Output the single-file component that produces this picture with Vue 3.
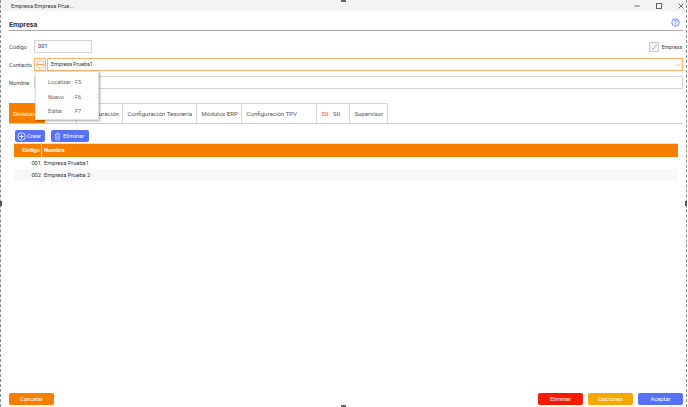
<script setup>
const tabs = [
  { label: 'Divisiones', width: 36, active: true },
  { label: '', width: 32 },
  { label: 'Configuración', width: 46, right: true },
  { label: 'Configuración Tesorería', width: 74 },
  { label: 'Módulos ERP', width: 45 },
  { label: 'Configuración TPV', width: 75 },
  { label: 'SII', width: 33, sii: true },
  { label: 'Supervisor', width: 38 }
]
const rows = [
  { code: '001', name: 'Empresa Prueba1' },
  { code: '002', name: 'Empresa Prueba 2' }
]
const menu = [
  { label: 'Localizar', key: 'F5' },
  { label: 'Nuevo', key: 'F6' },
  { label: 'Editar', key: 'F7' }
]
</script>

<template>
  <div class="window">
    <div class="handle handle-top"></div>
    <div class="handle handle-bottom"></div>
    <div class="handle-side handle-left"></div>
    <div class="handle-side handle-right"></div>

    <div class="titlebar">
      <span class="title-text">Empresa Empresa Prue...</span>
      <div class="win-buttons">
        <svg width="8" height="8" viewBox="0 0 8 8"><path d="M1.5 4h5" stroke="#555" stroke-width="0.9" fill="none"/></svg>
        <svg width="8" height="8" viewBox="0 0 8 8"><rect x="1.5" y="1.5" width="5" height="5" stroke="#555" stroke-width="0.9" fill="none"/></svg>
        <svg width="8" height="8" viewBox="0 0 8 8"><path d="M1.5 1.5l5 5M6.5 1.5l-5 5" stroke="#555" stroke-width="0.8" fill="none"/></svg>
      </div>
    </div>

    <div class="content">
      <div class="section-head">
        <span class="section-title">Empresa</span>
        <svg class="help" width="9" height="9" viewBox="0 0 10 10">
          <circle cx="5" cy="5" r="4.2" stroke="#5b77ee" stroke-width="0.9" fill="#eef1ff"/>
          <path d="M3.7 3.9c0-1.7 2.7-1.7 2.7 0 0 1-1.4 1-1.4 2.1" stroke="#5b77ee" stroke-width="0.9" fill="none"/>
          <circle cx="5" cy="7.5" r="0.55" fill="#5b77ee"/>
        </svg>
      </div>

      <div class="form-row first">
        <label class="lbl">Código</label>
        <div class="input code-input">001</div>
        <div class="check-wrap">
          <span class="check">
            <svg width="8" height="8" viewBox="0 0 8 8"><path d="M1 4.5l2 2 4-5" stroke="#7d9fe0" stroke-width="0.8" fill="none"/></svg>
          </span>
          <span class="check-label">Empresa</span>
        </div>
      </div>

      <div class="form-row">
        <label class="lbl">Contacto</label>
        <div class="icon-box">
          <svg width="9" height="9" viewBox="0 0 10 10">
            <circle cx="5" cy="5" r="4.3" stroke="#f9a24b" stroke-width="0.9" fill="none"/>
            <path d="M1.2 5h7.6" stroke="#f9a24b" stroke-width="1.1" fill="none"/>
          </svg>
        </div>
        <div class="input select-input">
          <span>Empresa Prueba1</span>
          <svg width="5" height="4" viewBox="0 0 5 4"><path d="M0.6 1l1.9 2 1.9-2" stroke="#f9a24b" stroke-width="0.8" fill="none"/></svg>
        </div>

        <div class="menu">
          <div v-for="item in menu" :key="item.key" class="menu-item">
            <span class="menu-label">{{ item.label }}</span>
            <span>{{ item.key }}</span>
          </div>
        </div>
      </div>

      <div class="form-row">
        <label class="lbl">Nombre</label>
        <div class="input name-input"></div>
      </div>

      <div class="tabs">
        <div
          v-for="tab in tabs"
          :key="tab.width"
          class="tab"
          :class="{ active: tab.active, right: tab.right }"
          :style="{ width: tab.width + 'px' }"
        >
          <span v-if="tab.sii" class="sii-logo">SII</span>
          {{ tab.label }}
        </div>
      </div>

      <div class="toolbar">
        <button class="btn-blue crear">
          <svg width="9" height="9" viewBox="0 0 10 10">
            <circle cx="5" cy="5" r="4.2" stroke="#fff" stroke-width="0.9" fill="none"/>
            <path d="M5 2.6v4.8M2.6 5h4.8" stroke="#fff" stroke-width="0.9"/>
          </svg>
          Crear
        </button>
        <button class="btn-blue eliminar">
          <svg width="7" height="9" viewBox="0 0 8 10">
            <path d="M1 2.5h6M3 2.5V1h2v1.5M1.6 2.5l.4 6.8h4l.4-6.8M3.2 4v4M4.8 4v4" stroke="#dfe5ff" stroke-width="0.7" fill="none"/>
          </svg>
          Eliminar
        </button>
      </div>

      <div class="grid">
        <div class="grid-head">
          <div class="col-code">Código</div>
          <div class="col-name">Nombre</div>
        </div>
        <div v-for="row in rows" :key="row.code" class="grid-row">
          <div class="col-code">{{ row.code }}</div>
          <div class="col-name">{{ row.name }}</div>
        </div>
      </div>
    </div>

    <div class="footer">
      <button class="foot-btn cancel">Cancelar</button>
      <div class="foot-right">
        <button class="foot-btn del">Eliminar</button>
        <button class="foot-btn opt">Opciones</button>
        <button class="foot-btn ok">Aceptar</button>
      </div>
    </div>
  </div>
</template>

<style scoped>
.window {
  position: relative;
  width: 688px;
  height: 407px;
  display: flex;
  flex-direction: column;
  background: #fff;
  font-family: Roboto, "Liberation Sans", sans-serif;
  font-size: 5.7px;
  color: #444;
  overflow: hidden;
}
.window::before,
.window::after {
  content: "";
  position: absolute;
  top: 0;
  bottom: 0;
  width: 0;
  border-left: 1px dashed #8a8a8a;
  z-index: 3;
}
.window::before { left: 0; }
.window::after { left: 686px; }
.handle {
  position: absolute;
  left: 341px;
  width: 5px;
  height: 2px;
  background: #666;
  z-index: 4;
}
.handle-top { top: 0; }
.handle-bottom { bottom: 0; }
.handle-side {
  position: absolute;
  top: 201px;
  width: 2px;
  height: 5px;
  background: #555;
  z-index: 4;
}
.handle-left { left: 0; }
.handle-right { left: 685px; }

.titlebar {
  height: 11px;
  flex: none;
  background: #f3f3f4;
  display: flex;
  align-items: center;
  justify-content: space-between;
  padding: 0 3px 0 11px;
  color: #333;
}
.title-text {
  font-size: 5.6px;
}
.win-buttons {
  display: flex;
  gap: 14px;
}
.content {
  flex: 1;
  display: flex;
  flex-direction: column;
  padding: 0 5px 0 9px;
}
.section-head {
  height: 20px;
  flex: none;
  border-bottom: 1px solid #aaa;
  display: flex;
  align-items: center;
  justify-content: space-between;
  padding-top: 8px;
  box-sizing: border-box;
}
.section-title {
  font-size: 7.2px;
  font-weight: 700;
  color: #333;
}
.help {
  margin-top: -5px;
  margin-right: 3px;
}
.form-row {
  position: relative;
  height: 13px;
  margin-top: 5px;
  display: flex;
  align-items: center;
}
.form-row.first {
  margin-top: 9px;
}
.lbl {
  width: 25px;
  flex: none;
  padding-top: 1px;
}
.input {
  height: 13px;
  box-sizing: border-box;
  border: 1px solid #d4d4d4;
  padding-left: 3px;
  line-height: 11px;
  color: #333;
}
.code-input {
  width: 58px;
}
.check-wrap {
  margin-left: auto;
  display: flex;
  align-items: center;
  gap: 3px;
}
.check {
  width: 8px;
  height: 8px;
  border: 1px solid #ccc;
  display: flex;
  align-items: center;
  justify-content: center;
  background: #f4f6fb;
}
.check-label {
  font-size: 5.2px;
  margin-right: 1px;
}
.icon-box {
  width: 12px;
  height: 13px;
  box-sizing: border-box;
  border: 1px solid #f9b26c;
  display: flex;
  align-items: center;
  justify-content: center;
  flex: none;
}
.select-input {
  flex: 1;
  margin-left: 1px;
  border-color: #f9b26c;
  display: flex;
  align-items: center;
  justify-content: space-between;
  padding: 0 1px 0 3px;
  font-size: 5.3px;
}
.name-input {
  flex: 1;
}
.menu {
  position: absolute;
  left: 26px;
  top: 13px;
  width: 64px;
  height: 49px;
  box-sizing: border-box;
  background: #fff;
  border: 1px solid #e0e0e0;
  box-shadow: 1px 1px 2px rgba(0, 0, 0, 0.35);
  padding-top: 3px;
  z-index: 2;
}
.menu-item {
  height: 14.5px;
  display: flex;
  align-items: center;
  padding-left: 12px;
  color: #666;
  font-size: 5.6px;
}
.menu-label {
  width: 27px;
}
.tabs {
  display: flex;
  height: 20px;
  margin-top: 14px;
  border-bottom: 1px solid #ccc;
  flex: none;
}
.tab {
  box-sizing: border-box;
  border: 1px solid #d6d6d6;
  border-left: 0;
  border-bottom: 0;
  display: flex;
  align-items: center;
  padding-left: 4.5px;
  white-space: nowrap;
  overflow: hidden;
  color: #555;
  font-size: 6.1px;
  gap: 5px;
}
.tab.active {
  background: #f77f00;
  color: #fff;
  border: 0;
  padding-left: 4px;
}
.tab.right {
  justify-content: flex-end;
  padding: 0 3px 0 0;
}
.sii-logo {
  color: #f2793a;
  font-weight: 700;
  font-size: 5.5px;
}
.toolbar {
  display: flex;
  gap: 6px;
  margin-top: 6px;
  margin-left: 6px;
  height: 12px;
  flex: none;
}
.btn-blue {
  height: 12px;
  border: 0;
  border-radius: 2px;
  background: #5671f5;
  color: #fff;
  font-family: inherit;
  font-size: 5.9px;
  display: flex;
  align-items: center;
  gap: 1px;
  padding: 0 0 0 2px;
}
.crear { width: 30px; }
.eliminar { width: 38px; gap: 2px; padding-left: 3px; }
.grid {
  margin-top: 1px;
  margin-left: 5px;
  width: 664px;
}
.grid-head {
  height: 14px;
  display: flex;
  align-items: center;
  background: #f77f00;
  color: #fff;
  font-weight: 700;
  border-top: 1px solid #fbd9b5;
  box-sizing: border-box;
}
.grid-row {
  height: 12px;
  display: flex;
  align-items: center;
  color: #333;
}
.grid-row:nth-child(3) {
  background: #f8f8f8;
}
.col-code {
  width: 28px;
  box-sizing: border-box;
  padding-right: 1px;
  text-align: right;
  height: 100%;
  line-height: 12px;
  flex: none;
}
.grid-head .col-code {
  border-right: 1px solid #fbd9b5;
  line-height: 13px;
}
.col-name {
  padding-left: 2px;
  line-height: 12px;
  height: 100%;
}
.grid-head .col-name {
  line-height: 13px;
}
.footer {
  flex: none;
  height: 14px;
  display: flex;
  justify-content: space-between;
  padding: 0 5px 0 9px;
}
.foot-right {
  display: flex;
  gap: 5px;
}
.foot-btn {
  width: 45px;
  height: 12px;
  border: 0;
  border-radius: 2px;
  color: #fff;
  font-family: inherit;
  font-size: 5.8px;
  padding: 0;
}
.cancel { background: #f77f00; }
.del { background: #f51a00; }
.opt { background: #f5a800; }
.ok { background: #5671f5; }
</style>
